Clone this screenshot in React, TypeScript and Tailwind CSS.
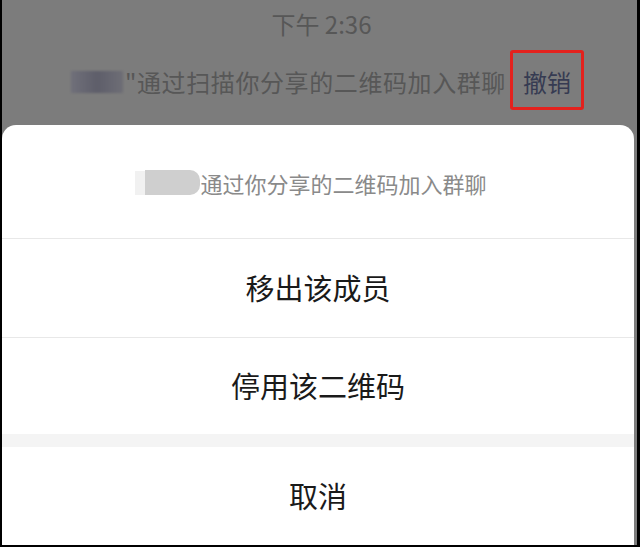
import React from "react";

const font = { fontFamily: '"Noto Sans CJK SC", "Noto Sans", sans-serif' };

export default function App() {
  return (
    <div
      className="w-[640px] h-[547px] bg-black overflow-hidden pl-[2px] pr-[3px] pb-[2px]"
      style={font}
    >
      <div className="w-full h-full bg-[#7c7c7c] flex flex-col">
        {/* top chat area */}
        <div className="h-[125px] shrink-0 flex flex-col items-center">
          <div className="h-[48px] flex items-center text-[24px] text-[#575757] pl-[4px]">
            下午 2:36
          </div>
          <div className="relative flex items-center h-[62px] mt-[1px] w-full pl-[69px]">
            <div className="w-[52px] h-[22px] mt-[4px] blur-[1px] bg-gradient-to-r from-[#70707a] via-[#5e5e6a] to-[#6e6e76]" />
            <span className="text-[24px] text-[#575757] ml-[2px] mt-[4px] leading-none tracking-[0.6px]">
              "通过扫描你分享的二维码加入群聊
            </span>
            <div className="ml-[4px] w-[74px] h-[60px] border-[3px] border-[#e3211d] rounded-[3px] flex items-center justify-center pt-[4px]">
              <span className="text-[24px] text-[#363b52] leading-none">撤销</span>
            </div>
          </div>
        </div>

        {/* action sheet */}
        <div className="flex-1 bg-white rounded-t-[14px] flex flex-col overflow-hidden mr-[3px]">
          <div className="h-[113px] shrink-0 flex items-center justify-center pr-[14px] pt-[2px]">
            <div className="flex items-center">
              <div className="w-[10px] h-[24px] bg-[#f1f1f1]" />
              <div className="w-[55px] h-[25px] bg-[#cfcfcf] rounded-r-[10px] blur-[0.5px]" />
            </div>
            <span className="text-[22px] text-[#8a8a8a] leading-none">
              通过你分享的二维码加入群聊
            </span>
          </div>
          <div className="h-px bg-[#e8e8e8] shrink-0" />
          <div className="h-[98px] shrink-0 flex items-center justify-center text-[29px] text-[#1a1a1a]">
            移出该成员
          </div>
          <div className="h-px bg-[#e8e8e8] shrink-0" />
          <div className="h-[96px] shrink-0 flex items-center justify-center text-[29px] text-[#1a1a1a]">
            停用该二维码
          </div>
          <div className="h-[13px] bg-[#f4f4f4] shrink-0" />
          <div className="flex-1 flex items-center justify-center text-[29px] text-[#1a1a1a]">
            取消
          </div>
        </div>
      </div>
    </div>
  );
}
